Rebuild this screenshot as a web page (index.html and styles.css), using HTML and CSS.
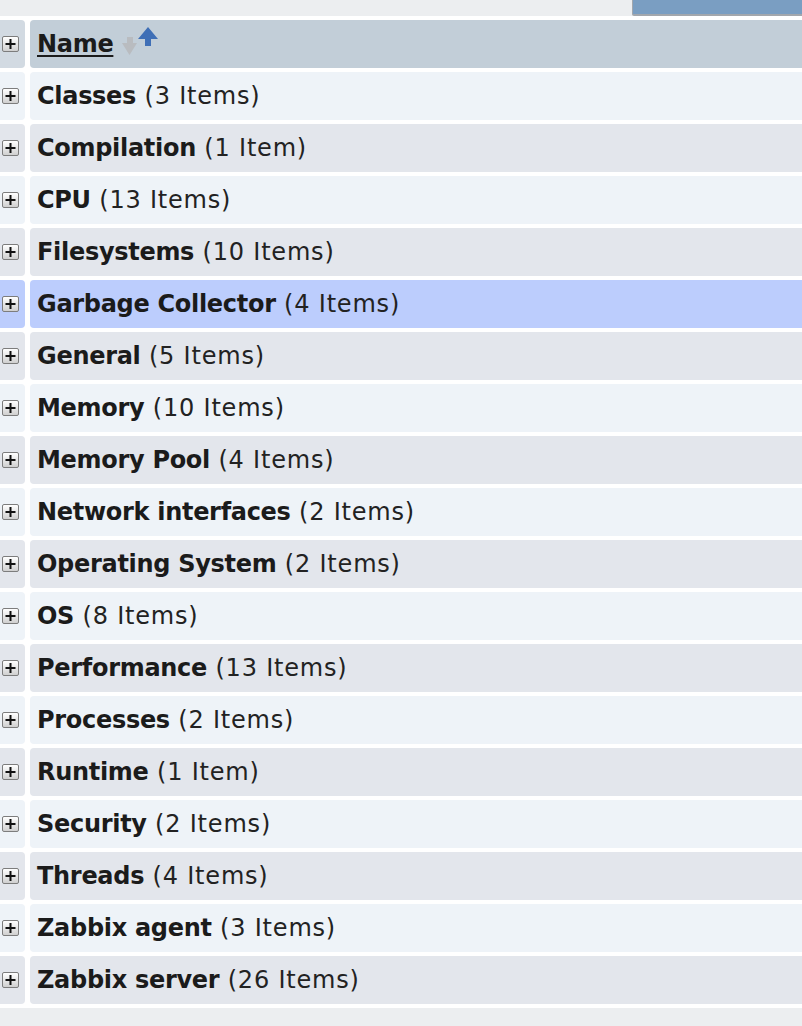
FILE: index.html
```html
<!DOCTYPE html>
<html>
<head>
<meta charset="utf-8">
<link rel="stylesheet" href="styles.css">
</head>
<body>
<div class="topbar"><div class="topbtn"></div></div>
<div class="list">
  <div class="row header">
    <div class="toggle"><span class="plus"><svg viewBox="0 0 15 14" width="15" height="14"><rect x="2.5" y="6" width="10" height="2" fill="#111"/><rect x="6.5" y="2" width="2" height="10" fill="#111"/></svg></span></div>
    <div class="name"><a class="sortlink">Name</a><svg class="sort" width="38" height="30" viewBox="0 0 38 30"><path d="M6 11h6v6h4l-7.5 12l-7.5-12h5z" fill="#b9bcc0"/><path d="M24 20v-7h-7l10-12l10 12h-7v7z" fill="#3f6fb6"/></svg></div>
  </div>
  <div class="row odd"><div class="toggle"><span class="plus"><svg viewBox="0 0 15 14" width="15" height="14"><rect x="2.5" y="6" width="10" height="2" fill="#111"/><rect x="6.5" y="2" width="2" height="10" fill="#111"/></svg></span></div><div class="name"><b>Classes</b><span class="cnt">&nbsp;(3 Items)</span></div></div>
  <div class="row even"><div class="toggle"><span class="plus"><svg viewBox="0 0 15 14" width="15" height="14"><rect x="2.5" y="6" width="10" height="2" fill="#111"/><rect x="6.5" y="2" width="2" height="10" fill="#111"/></svg></span></div><div class="name"><b>Compilation</b><span class="cnt">&nbsp;(1 Item)</span></div></div>
  <div class="row odd"><div class="toggle"><span class="plus"><svg viewBox="0 0 15 14" width="15" height="14"><rect x="2.5" y="6" width="10" height="2" fill="#111"/><rect x="6.5" y="2" width="2" height="10" fill="#111"/></svg></span></div><div class="name"><b>CPU</b><span class="cnt">&nbsp;(13 Items)</span></div></div>
  <div class="row even"><div class="toggle"><span class="plus"><svg viewBox="0 0 15 14" width="15" height="14"><rect x="2.5" y="6" width="10" height="2" fill="#111"/><rect x="6.5" y="2" width="2" height="10" fill="#111"/></svg></span></div><div class="name"><b>Filesystems</b><span class="cnt">&nbsp;(10 Items)</span></div></div>
  <div class="row hover"><div class="toggle"><span class="plus"><svg viewBox="0 0 15 14" width="15" height="14"><rect x="2.5" y="6" width="10" height="2" fill="#111"/><rect x="6.5" y="2" width="2" height="10" fill="#111"/></svg></span></div><div class="name"><b>Garbage Collector</b><span class="cnt">&nbsp;(4 Items)</span></div></div>
  <div class="row even"><div class="toggle"><span class="plus"><svg viewBox="0 0 15 14" width="15" height="14"><rect x="2.5" y="6" width="10" height="2" fill="#111"/><rect x="6.5" y="2" width="2" height="10" fill="#111"/></svg></span></div><div class="name"><b>General</b><span class="cnt">&nbsp;(5 Items)</span></div></div>
  <div class="row odd"><div class="toggle"><span class="plus"><svg viewBox="0 0 15 14" width="15" height="14"><rect x="2.5" y="6" width="10" height="2" fill="#111"/><rect x="6.5" y="2" width="2" height="10" fill="#111"/></svg></span></div><div class="name"><b>Memory</b><span class="cnt">&nbsp;(10 Items)</span></div></div>
  <div class="row even"><div class="toggle"><span class="plus"><svg viewBox="0 0 15 14" width="15" height="14"><rect x="2.5" y="6" width="10" height="2" fill="#111"/><rect x="6.5" y="2" width="2" height="10" fill="#111"/></svg></span></div><div class="name"><b>Memory Pool</b><span class="cnt">&nbsp;(4 Items)</span></div></div>
  <div class="row odd"><div class="toggle"><span class="plus"><svg viewBox="0 0 15 14" width="15" height="14"><rect x="2.5" y="6" width="10" height="2" fill="#111"/><rect x="6.5" y="2" width="2" height="10" fill="#111"/></svg></span></div><div class="name"><b>Network interfaces</b><span class="cnt">&nbsp;(2 Items)</span></div></div>
  <div class="row even"><div class="toggle"><span class="plus"><svg viewBox="0 0 15 14" width="15" height="14"><rect x="2.5" y="6" width="10" height="2" fill="#111"/><rect x="6.5" y="2" width="2" height="10" fill="#111"/></svg></span></div><div class="name"><b>Operating System</b><span class="cnt">&nbsp;(2 Items)</span></div></div>
  <div class="row odd"><div class="toggle"><span class="plus"><svg viewBox="0 0 15 14" width="15" height="14"><rect x="2.5" y="6" width="10" height="2" fill="#111"/><rect x="6.5" y="2" width="2" height="10" fill="#111"/></svg></span></div><div class="name"><b>OS</b><span class="cnt">&nbsp;(8 Items)</span></div></div>
  <div class="row even"><div class="toggle"><span class="plus"><svg viewBox="0 0 15 14" width="15" height="14"><rect x="2.5" y="6" width="10" height="2" fill="#111"/><rect x="6.5" y="2" width="2" height="10" fill="#111"/></svg></span></div><div class="name"><b>Performance</b><span class="cnt">&nbsp;(13 Items)</span></div></div>
  <div class="row odd"><div class="toggle"><span class="plus"><svg viewBox="0 0 15 14" width="15" height="14"><rect x="2.5" y="6" width="10" height="2" fill="#111"/><rect x="6.5" y="2" width="2" height="10" fill="#111"/></svg></span></div><div class="name"><b>Processes</b><span class="cnt">&nbsp;(2 Items)</span></div></div>
  <div class="row even"><div class="toggle"><span class="plus"><svg viewBox="0 0 15 14" width="15" height="14"><rect x="2.5" y="6" width="10" height="2" fill="#111"/><rect x="6.5" y="2" width="2" height="10" fill="#111"/></svg></span></div><div class="name"><b>Runtime</b><span class="cnt">&nbsp;(1 Item)</span></div></div>
  <div class="row odd"><div class="toggle"><span class="plus"><svg viewBox="0 0 15 14" width="15" height="14"><rect x="2.5" y="6" width="10" height="2" fill="#111"/><rect x="6.5" y="2" width="2" height="10" fill="#111"/></svg></span></div><div class="name"><b>Security</b><span class="cnt">&nbsp;(2 Items)</span></div></div>
  <div class="row even"><div class="toggle"><span class="plus"><svg viewBox="0 0 15 14" width="15" height="14"><rect x="2.5" y="6" width="10" height="2" fill="#111"/><rect x="6.5" y="2" width="2" height="10" fill="#111"/></svg></span></div><div class="name"><b>Threads</b><span class="cnt">&nbsp;(4 Items)</span></div></div>
  <div class="row odd"><div class="toggle"><span class="plus"><svg viewBox="0 0 15 14" width="15" height="14"><rect x="2.5" y="6" width="10" height="2" fill="#111"/><rect x="6.5" y="2" width="2" height="10" fill="#111"/></svg></span></div><div class="name"><b>Zabbix agent</b><span class="cnt">&nbsp;(3 Items)</span></div></div>
  <div class="row even"><div class="toggle"><span class="plus"><svg viewBox="0 0 15 14" width="15" height="14"><rect x="2.5" y="6" width="10" height="2" fill="#111"/><rect x="6.5" y="2" width="2" height="10" fill="#111"/></svg></span></div><div class="name"><b>Zabbix server</b><span class="cnt">&nbsp;(26 Items)</span></div></div>
</div>
<div class="footer"></div>
</body>
</html>
```

FILE: styles.css
```css
html, body {
  margin: 0;
  padding: 0;
  background: #ffffff;
  width: 802px;
  overflow: hidden;
}
body {
  font-family: "DejaVu Sans", Verdana, sans-serif;
  font-size: 24px;
  color: #222;
}
.topbar {
  height: 16px;
  background: #eceef0;
  display: flex;
  justify-content: flex-end;
}
.topbtn {
  width: 169px;
  height: 14px;
  background: #7a9ec2;
  border-bottom: 2px solid #a2a7ad;
  border-left: 1px solid #a2a7ad;
  box-sizing: content-box;
  border-bottom-left-radius: 2px;
}
.list {
  margin-top: 4px;
  display: flex;
  flex-direction: column;
  gap: 4px;
}
.row {
  display: flex;
  gap: 5px;
  height: 48px;
}
.toggle {
  width: 25px;
  flex: none;
  border-radius: 0 4px 4px 0;
  display: flex;
  align-items: center;
  padding-left: 2px;
  box-sizing: border-box;
}
.name {
  flex: 1;
  border-radius: 4px 0 0 4px;
  padding-left: 7px;
  display: flex;
  align-items: center;
  white-space: nowrap;
}
.name b {
  font-weight: bold;
  color: #1b1b1b;
  letter-spacing: -0.3px;
}
.cnt {
  letter-spacing: 0.8px;
}
.plus {
  width: 15px;
  height: 14px;
  border: 1px solid #7d7d7d;
  border-radius: 2px;
  background: linear-gradient(#ffffff, #d0d0d0);
  display: flex;
}
.header .toggle { background: #d2dae2; }
.header .name { background: #c2ced8; }
.sortlink {
  font-weight: bold;
  color: #1b1b1b;
  letter-spacing: -0.3px;
  text-decoration: underline;
  text-decoration-thickness: 2px;
  text-underline-offset: 3px;
}
.sort {
  align-self: flex-start;
  margin-top: 6px;
  margin-left: 8px;
}
.odd .toggle, .odd .name { background: #eef3f8; }
.even .toggle, .even .name { background: #e3e6ec; }
.hover .toggle, .hover .name { background: #bccdfd; }
.footer {
  margin-top: 4px;
  height: 18px;
  background: #eceef0;
}
```
